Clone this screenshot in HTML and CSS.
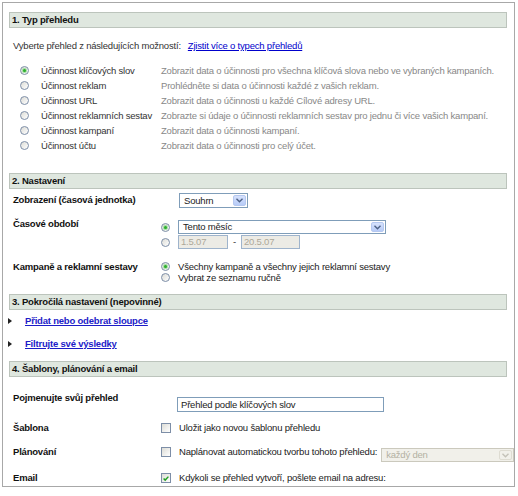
FILE: index.html
```html
<!DOCTYPE html>
<html lang="cs">
<head>
<meta charset="utf-8">
<title>Přehledy</title>
<link rel="stylesheet" href="styles.css">
</head>
<body>
<div class="frame">
  <section class="sec">
    <div class="hdr">1. Typ přehledu</div>
    <div class="intro">Vyberte přehled z následujících možností:<a class="link" href="#">Zjistit více o typech přehledů</a></div>
    <ul class="types">
      <li><span class="radio on"></span><span class="tname">Účinnost klíčových slov</span><span class="tdesc">Zobrazit data o účinnosti pro všechna klíčová slova nebo ve vybraných kampaních.</span></li>
      <li><span class="radio"></span><span class="tname">Účinnost reklam</span><span class="tdesc">Prohlédněte si data o účinnosti každé z vašich reklam.</span></li>
      <li><span class="radio"></span><span class="tname">Účinnost URL</span><span class="tdesc">Zobrazit data o účinnosti u každé Cílové adresy URL.</span></li>
      <li><span class="radio"></span><span class="tname">Účinnost reklamních sestav</span><span class="tdesc">Zobrazte si údaje o účinnosti reklamních sestav pro jednu či více vašich kampaní.</span></li>
      <li><span class="radio"></span><span class="tname">Účinnost kampaní</span><span class="tdesc">Zobrazit data o účinnosti kampaní.</span></li>
      <li><span class="radio"></span><span class="tname">Účinnost účtu</span><span class="tdesc">Zobrazit data o účinnosti pro celý účet.</span></li>
    </ul>
  </section>

  <section class="sec sec2">
    <div class="hdr">2. Nastavení</div>
    <div class="frow row-a">
      <div class="flabel lh13">Zobrazení (časová jednotka)</div>
      <div class="fctl">
        <div class="opt"><span class="rspace"></span>
          <div class="sel w-souhrn"><span class="val">Souhrn</span><span class="btn"><svg width="7" height="5" viewBox="0 0 7 5"><path d="M0.5 0.8 L3.5 3.8 L6.5 0.8" fill="none" stroke="#4d6185" stroke-width="1.4"/></svg></span></div>
        </div>
      </div>
    </div>
    <div class="frow row-b">
      <div class="flabel">Časové období</div>
      <div class="fctl">
        <div class="opt o1"><span class="radio on"></span>
          <div class="sel w-mesic"><span class="val">Tento měsíc</span><span class="btn"><svg width="7" height="5" viewBox="0 0 7 5"><path d="M0.5 0.8 L3.5 3.8 L6.5 0.8" fill="none" stroke="#4d6185" stroke-width="1.4"/></svg></span></div>
        </div>
        <div class="opt o2"><span class="radio"></span>
          <span class="dinput w-d1">1.5.07</span><span class="dash">-</span><span class="dinput w-d2">20.5.07</span>
        </div>
      </div>
    </div>
    <div class="frow row-c">
      <div class="flabel">Kampaně a reklamní sestavy</div>
      <div class="fctl">
        <div class="opt tight"><span class="radio on"></span><span class="otext">Všechny kampaně a všechny jejich reklamní sestavy</span></div>
        <div class="opt tight"><span class="radio"></span><span class="otext">Vybrat ze seznamu ručně</span></div>
      </div>
    </div>
  </section>

  <section class="sec sec3">
    <div class="hdr">3. Pokročilá nastavení (nepovinné)</div>
    <div class="more m1"><span class="tri"></span><a class="blink" href="#">Přidat nebo odebrat sloupce</a></div>
    <div class="more m2"><span class="tri"></span><a class="blink" href="#">Filtrujte své výsledky</a></div>
  </section>

  <section class="sec sec4">
    <div class="hdr">4. Šablony, plánování a email</div>
    <div class="frow row-name">
      <div class="flabel">Pojmenujte svůj přehled</div>
      <div class="fctl"><span class="tinput">Přehled podle klíčových slov</span></div>
    </div>
    <div class="frow row-chk">
      <div class="flabel">Šablona</div>
      <div class="fctl"><div class="opt"><span class="chk"></span><span class="otext">Uložit jako novou šablonu přehledu</span></div></div>
    </div>
    <div class="frow row-plan">
      <div class="flabel">Plánování</div>
      <div class="fctl"><div class="opt plan"><span class="chk"></span><span class="otext">Naplánovat automatickou tvorbu tohoto přehledu:</span>
        <div class="sel dis w-den"><span class="val">každý den</span><span class="btn"><svg width="7" height="5" viewBox="0 0 7 5"><path d="M0.5 0.8 L3.5 3.8 L6.5 0.8" fill="none" stroke="#c4c2b8" stroke-width="1.4"/></svg></span></div>
      </div></div>
    </div>
    <div class="frow row-mail">
      <div class="flabel">Email</div>
      <div class="fctl"><div class="opt"><span class="chk on"><svg width="9" height="9" viewBox="0 0 9 9"><path d="M1.8 4.4 L3.6 6.3 L7.2 2.4" fill="none" stroke="#21a121" stroke-width="1.6"/></svg></span><span class="otext">Kdykoli se přehled vytvoří, pošlete email na adresu:</span></div></div>
    </div>
  </section>
</div>
</body>
</html>
```

FILE: styles.css
```css
* { box-sizing: border-box; }
html, body { margin: 0; padding: 0; background: #fff; }
body {
  font-family: "Liberation Sans", Arial, sans-serif;
  font-size: 9.5px;
  line-height: 12px;
  letter-spacing: -0.2px;
  color: #333;
}
.frame {
  margin: 2px 0 0 2px;
  width: 513px;
  height: 485px;
  border: 1px solid #a8a8a8;
  overflow: hidden;
  padding-top: 9px;
}
.sec { margin-left: 6px; width: 498px; }
.hdr {
  height: 16px;
  line-height: 14px;
  border: 1px solid #bcc4bc;
  background: #dfe7df;
  padding-left: 2px;
  font-weight: bold;
  color: #111;
}
.intro { margin-top: 12px; padding-left: 4px; }
.link { margin-left: 7px; color: #0000cc; text-decoration: underline; }
.types { list-style: none; margin: 11px 0 0; padding: 0; }
.types li { display: flex; align-items: center; height: 15px; }
.types .radio { margin-left: 11px; margin-right: 12px; }
.tname { width: 120px; white-space: nowrap; }
.tdesc { color: #888; white-space: nowrap; }

.radio {
  flex: none;
  width: 9px; height: 9px;
  border: 1px solid #7d8ea7;
  border-radius: 50%;
  background: linear-gradient(135deg, #dcdcd6, #ffffff);
  display: inline-flex; align-items: center; justify-content: center;
}
.radio.on::after {
  content: "";
  width: 3px; height: 3px;
  border-radius: 50%;
  background: #2cae2c;
  box-shadow: 0 0 1px 1px #9bdc9b;
}
.chk {
  flex: none;
  width: 10px; height: 10px;
  border: 1px solid #7d8ea7;
  background: linear-gradient(135deg, #dcdcd6, #ffffff);
  display: inline-flex; align-items: center; justify-content: center;
}
.chk svg { display: block; }

.sec2 { margin-top: 20px; }
.frow { display: flex; padding-left: 4px; }
.flabel { width: 148px; flex: none; font-weight: bold; color: #111; }
.fctl { flex: 1; }
.opt { display: flex; align-items: center; }
.opt .radio, .opt .chk { margin-right: 8px; }
.rspace { width: 18px; flex: none; }

.row-a { margin-top: 4px; }
.row-a .opt { height: 15px; }
.lh13 { line-height: 13px; margin-top: 0; }
.row-b { margin-top: 10px; }
.row-b .o1 { margin-top: 2px; height: 14px; }
.row-b .o2 { margin-top: 1px; height: 14px; }
.row-c { margin-top: 12px; }
.opt.tight { height: 11px; line-height: 11px; color: #222; }

.sel {
  display: flex; align-items: stretch;
  border: 1px solid #7f9db9;
  background: #fff;
  color: #222;
}
.sel .val { flex: 1; padding-left: 4px; display: flex; align-items: center; }
.sel .btn {
  width: 13px; margin: 1px;
  border-radius: 2px;
  background: linear-gradient(#d6e2fd, #b7cbf7);
  border: 1px solid #b5c8f0;
  display: flex; align-items: center; justify-content: center;
}
.sel.dis { border-color: #cbc9bd; background: #f1f0ea; color: #b3b0a2; }
.sel.dis .btn { background: #f1f0ea; border-color: #dedcd2; }
.w-souhrn { width: 69px; height: 15px; }
.w-mesic { width: 208px; height: 14px; }
.w-den { width: 133px; height: 14px; margin-left: 4px; }

.dinput {
  height: 14px;
  border: 1px solid #9fb4cc;
  background: #ecebe5;
  color: #aca899;
  padding-left: 2px;
  display: inline-flex; align-items: center;
}
.w-d1 { width: 50px; }
.w-d2 { width: 59px; }
.dash { margin: 0 5px; color: #333; }

.sec3 { margin-top: 11px; }
.more { display: flex; align-items: center; height: 12px; }
.m1 { margin-top: 5px; }
.m2 { margin-top: 11px; }
.tri {
  width: 0; height: 0;
  margin-left: -1px; margin-right: 13px;
  border-top: 3.5px solid transparent;
  border-bottom: 3.5px solid transparent;
  border-left: 4px solid #222;
}
.blink { color: #1c1cc8; font-weight: bold; text-decoration: underline; }

.sec4 { margin-top: 11px; }
.row-name { margin-top: 15px; }
.tinput {
  display: flex; align-items: center;
  margin-top: 5px; margin-left: 16px;
  width: 207px; height: 15px;
  border: 1px solid #7f9db9;
  padding-left: 3px;
  color: #222;
}
.row-chk { margin-top: 10px; }
.row-chk .opt { height: 12px; }
.row-plan { margin-top: 12px; }
.opt.plan { align-items: flex-start; }
.opt.plan .chk { margin-top: 1px; }
.opt.plan .sel { margin-top: 2px; }
.row-mail { margin-top: 10px; }
.row-mail .opt { height: 12px; }
.otext { white-space: nowrap; color: #222; }
```
